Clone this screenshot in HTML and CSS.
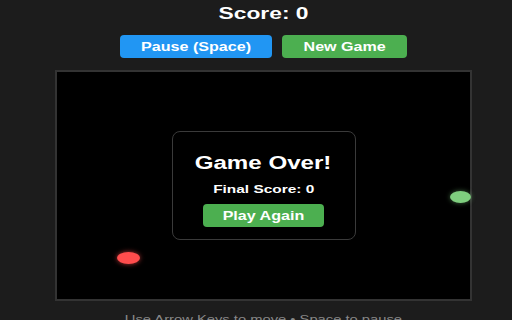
FILE: index.html
```html
<!DOCTYPE html>
<html lang="en">
<head>
  <meta charset="UTF-8" />
  <meta name="viewport" content="width=device-width, initial-scale=1" />
  <title>Snake</title>
  <link rel="stylesheet" href="styles.css">
</head>
<body>
  <div class="game">
    <h1 class="score"><span class="wide">Score: 0</span></h1>

    <div class="controls">
      <button class="btn btn-pause"><span class="wide">Pause (Space)</span></button>
      <button class="btn btn-new"><span class="wide">New Game</span></button>
    </div>

    <div class="board">
      <div class="dot food"></div>
      <div class="dot snake"></div>

      <div class="game-over">
        <h2><span class="wide">Game Over!</span></h2>
        <p class="final"><span class="wide">Final Score: 0</span></p>
        <button class="btn btn-again"><span class="wide">Play Again</span></button>
      </div>
    </div>

    <p class="hint"><span class="wide">Use Arrow Keys to move &bull; Space to pause</span></p>
  </div>
</body>
</html>
```

FILE: styles.css
```css
* {
  box-sizing: border-box;
  font-family: 'Liberation Sans', Arial, sans-serif;
}

body {
  margin: 0;
  padding: 0 0 0 15px;
  background: #1c1c1c;
  color: #fff;
  overflow: hidden;
}

.game {
  display: flex;
  flex-direction: column;
  align-items: center;
}

/* screenshot text is stretched horizontally */
.wide {
  display: inline-block;
  transform: scaleX(1.34);
  white-space: nowrap;
}

.score {
  margin: 0;
  padding-top: 4px;
  font-size: 17px;
  line-height: 20px;
  font-weight: bold;
}

.controls {
  display: flex;
  gap: 10px;
  margin-top: 11px;
}

.btn {
  height: 23px;
  padding: 0;
  border: none;
  border-radius: 4px;
  color: #fff;
  font-size: 12px;
  font-weight: bold;
  cursor: pointer;
}

.btn-pause {
  width: 152px;
  background: #2196f3;
}

.btn-new {
  width: 125px;
  background: #4caf50;
}

.board {
  position: relative;
  width: 417px;
  height: 231px;
  margin-top: 12px;
  background: #000;
  border: 2px solid #333;
  display: flex;
  align-items: center;
  justify-content: center;
}

.dot {
  position: absolute;
  height: 12px;
  border-radius: 50%;
}

.food {
  left: 60px;
  top: 180px;
  width: 23px;
  background: #ff4d4d;
  box-shadow: 0 0 5px rgba(255, 77, 77, 0.7);
}

.snake {
  left: 393px;
  top: 119px;
  width: 21px;
  background: #7fcf7f;
  box-shadow: 0 0 5px rgba(127, 207, 127, 0.5);
}

.game-over {
  position: relative;
  width: 184px;
  height: 109px;
  padding: 20px 0 0;
  background: rgba(0, 0, 0, 0.85);
  border: 1px solid #3a3a3a;
  border-radius: 8px;
  display: flex;
  flex-direction: column;
  align-items: center;
}

.game-over h2 {
  margin: 0;
  font-size: 18px;
  line-height: 22px;
  font-weight: bold;
}

.final {
  margin: 8px 0 0;
  font-size: 11.5px;
  line-height: 14px;
  font-weight: bold;
}

.btn-again {
  width: 121px;
  margin-top: 8px;
  background: #4caf50;
}

.hint {
  margin: 12px 0 0;
  font-size: 11px;
  line-height: 13px;
  color: #888;
}
```
